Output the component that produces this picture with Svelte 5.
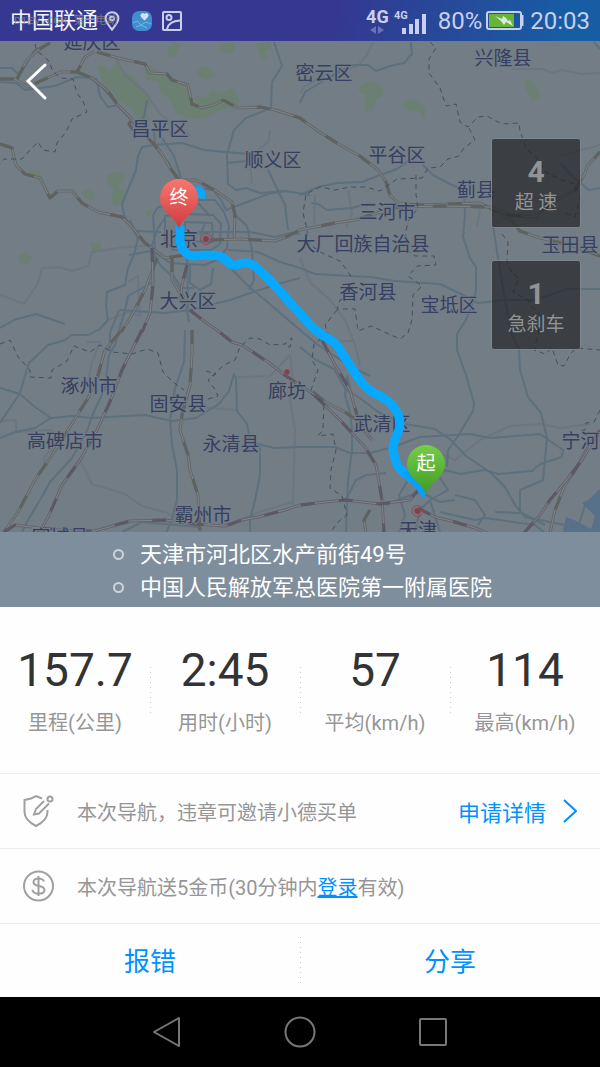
<script lang="ts">
  type Place = { name: string; x: number; y: number };

  const places: Place[] = [
    { name: '延庆区', x: 92, y: 49 },
    { name: '密云区', x: 324, y: 80 },
    { name: '兴隆县', x: 503, y: 65 },
    { name: '昌平区', x: 160, y: 136 },
    { name: '顺义区', x: 273, y: 167 },
    { name: '平谷区', x: 397, y: 162 },
    { name: '蓟县', x: 476, y: 197 },
    { name: '三河市', x: 387, y: 219 },
    { name: '北京', x: 179, y: 246 },
    { name: '大厂回族自治县', x: 363, y: 251 },
    { name: '玉田县', x: 570, y: 252 },
    { name: '香河县', x: 368, y: 299 },
    { name: '大兴区', x: 188, y: 308 },
    { name: '宝坻区', x: 449, y: 312 },
    { name: '涿州市', x: 89, y: 393 },
    { name: '廊坊', x: 287, y: 398 },
    { name: '固安县', x: 178, y: 411 },
    { name: '武清区', x: 382, y: 431 },
    { name: '高碑店市', x: 65, y: 448 },
    { name: '永清县', x: 231, y: 451 },
    { name: '宁河区', x: 590, y: 448 },
    { name: '霸州市', x: 203, y: 522 },
    { name: '容城县', x: 60, y: 544 },
    { name: '天津', x: 418, y: 537 }
  ];

  const minorRoads: string[] = [
    'M115 56 125 75 145 92 160 114 180 128 190 136',
    'M373 42 367 55 358 66 330 72 304 87 300 93',
    'M512 69 542 69 552 73 562 70 582 74 600 73',
    'M0 295 24 304 38 283 42 268 60 267 72 271 88 266 92 252 118 248 150 245',
    'M108 320 128 312 140 316 138 276 128 282',
    'M270 130 268 142 258 150 250 162 252 184',
    'M315 194 314 225M348 190 352 214 346 228',
    'M300 258 310 282 330 300 345 320 355 345 360 365',
    'M325 342 355 341',
    'M80 460 92 484 125 494 142 506 165 512 180 520',
    'M0 421 16 420 16 432 52 430 62 437 44 458 44 468',
    'M238 377 270 376 290 355 293 380 290 400 295 430 293 505',
    'M430 448 455 460 480 440 510 426 540 424 560 428 590 424',
    'M560 156 600 145M480 210 477 226',
    'M86 342 100 342 92 362 88 382M200 407 235 410',
    'M230 524 262 511 293 502'
  ];

  const roads: string[] = [
    'M0 68 12 68 18 74 24 68 34 51 50 43',
    'M0 82 16 83 25 90 55 86 77 77 90 78 103 88 119 107 130 119 140 132',
    'M96 78 100 96 108 107 118 105',
    'M141 128 145 112 147 100',
    'M274 42 282 66 272 82 271 108 246 118 234 130 227 154 228 184 236 190 246 188 260 193 285 191 310 195',
    'M411 42 412 54 404 63 390 66 376 71 368 65 352 65 332 76 305 92 300 103',
    'M594 42 600 49',
    'M154 130 155 147 169 163 176 178M162 138 174 156 181 178',
    'M154 145 182 143 204 150 248 154M227 163 247 161 261 164',
    'M154 145 142 147 138 156 136 170 129 187 122 204 124 215 138 238 134 255 128 268 125 285 107 292 106 307 108 320 98 331',
    'M130 220 137 235 152 248 160 265 178 282 185 300 189 322',
    'M153 215 158 207 173 205 190 200 215 200 224 212 229 226 227 248 219 259 205 265 170 263 155 252 153 215',
    'M165 216 185 214 213 215 221 224 220 244 211 250 173 250 165 240Z',
    'M185 222 212 223 213 242 185 241Z',
    'M192 187 213 190 221 200 226 210 268 194 285 191M198 203 210 216M200 235 205 224',
    'M170 232 250 232 275 237 290 233 300 234M228 250 258 252 280 262 300 268',
    'M235 215 247 226 252 250 254 280 249 290M268 170 285 205 288 230',
    'M136 231 161 232M165 218 158 228 151 248M151 251 129 255M155 251 153 282 128 296 125 311 119 330',
    'M190 265 190 283 200 290 211 284 213 268M170 270 181 288 194 288',
    'M120 310 165 313 190 310 230 300 250 293 278 284 300 278',
    'M187 248 188 310M228 265 245 283 265 300 300 330 318 345 350 366 370 376',
    'M0 328 14 320 36 314 65 324M119 310 110 333 110 350',
    'M97 330 89 335 72 335 65 340 48 345 29 363 24 379 20 393 0 423',
    'M119 330 115 345 109 355 107 370 105 388 92 416 87 431 72 458 50 482 40 500 28 520 22 532',
    'M0 388 20 394 35 407 51 418 72 416 92 418 145 415 172 421 196 418 219 404 229 391 234 374 236 378 237 411 247 424 250 440 258 444 274 448 300 447 335 447 350 453 370 453 390 448 420 437 470 434 490 438 540 434 563 450 562 457 540 464 532 471 498 474 484 470 460 474 445 470 425 488',
    'M0 438 15 432 35 428 51 418',
    'M185 330 184 362 175 388 170 420 172 445 177 470 177 500 171 522 166 533',
    'M260 444 260 475 255 500 250 520 250 533',
    'M300 195 318 187 337 183 362 182 380 175 397 169 408 161',
    'M423 165 433 175 450 184 464 190 465 214 463 237 470 258 476 267 476 290 474 300 466 320 457 334 457 350 466 375 474 403 473 411 458 436 448 450 447 467',
    'M311 203 318 204 327 210 352 208 370 203',
    'M300 268 315 274 350 276 370 277 395 281 440 284 463 295 478 303 505 300 535 300 567 289 600 289',
    'M493 225 497 252 505 300 512 335 519 350 520 370 528 397 541 413 547 438 543 480 520 490 520 512 545 525',
    'M560 163 574 178 589 190 600 188',
    'M300 347 316 360 334 369 346 390 360 398 378 412 405 424 435 429 451 440 466 456 490 472 505 487 515 505 525 517 560 524 578 527 585 505 600 490',
    'M350 388 347 376 345 395 350 412 352 430 352 450 348 480 346 533',
    'M346 500 356 480 366 475 386 473',
    'M399 532 405 515 399 495 408 480 425 470 435 470 448 490 430 500 420 510 415 532',
    'M386 505 400 499 420 492 440 502 455 500M430 500 440 532M440 512 475 520 485 518 500 520 535 525 545 533',
    'M455 495 475 500 485 515 478 525M520 513 495 512',
    'M122 532 142 522 165 524 200 527'
  ];

  // double line highways with dark inlay sections
  const highways: string[] = [
    'M0 79 15 79 28 87 60 72 77 72 85 57 95 51',
    'M17 79 27 60 38 50 50 43',
    'M77 72 92 78 108 91 118 105 132 119 129 124 133 130',
    'M97 52 118 58 145 64 150 73 167 74 172 80 188 85 192 104 202 108 213 105 223 100 238 108 260 107 275 110 300 118 318 131 340 145 360 156 378 170 386 182 390 195 398 203 418 205 450 204 480 203 500 213 512 221 520 231 540 238 570 245 600 256',
    'M0 144 12 148 16 165 25 174 40 178 50 198 58 191 72 191 82 203 98 212 122 217 132 227 145 243 165 258 178 256 195 253',
    'M148 138 160 151 170 168 179 180 196 180 216 191 232 202 235 215 234 240',
    'M172 258 172 280 180 293 184 303',
    'M157 258 145 290 132 315 121 332',
    'M210 240 240 239 275 241 286 237 300 230 335 223 355 220 397 207 445 206 490 207 510 215 535 217 552 202 560 198 575 190 584 175 588 165 600 152',
    'M120 332 105 350 98 375 88 398 66 433 50 458 35 480 18 512 4 532',
    'M192 330 192 355 190 385 182 415 180 430 188 455 190 470 198 495 200 532',
    'M313 392 325 402 345 412 365 426',
    'M600 432 588 447 574 472 565 485 555 510 550 533M370 510 364 520 366 533'
  ];

  const railways: string[] = [
    'M187 265 182 285 180 300M152 248 153 285 150 313 142 332',
    'M190 310 205 322 217 330 232 342 242 345 268 362 286 376 312 393 340 420 365 447 376 465 382 500 384 532',
    'M142 330 122 370 112 397 97 430 80 460 62 485 50 513 40 532',
    'M4 532 15 525 40 528 70 531 95 531 130 521 165 520 195 524 225 526 242 520 258 517 285 510 300 505 325 502 345 500 380 504 410 500 418 490',
    'M322 340 335 365 350 390 354 405 360 425 372 440',
    'M418 508 435 517 455 522 475 528 490 534M524 533 540 515 550 500 565 482 582 460 600 430'
  ];

  const borders: string[] = [
    'M35 44 37 51 48 60 53 71 60 78 73 79 77 93 83 101 87 112 72 119 66 132 57 143 55 152 43 150 38 142 30 150 22 159 4 159 0 164',
    'M430 42 436 48 429 59 429 73 440 88 446 106 456 104 460 122 468 127 478 117 487 116 502 124 519 123 520 131 527 150 537 158 545 172 562 180 575 184 580 198 575 217 564 212',
    'M469 128 475 140 464 148 459 156 448 159 440 167 428 168 422 178 397 179 380 191 366 187 350 187 335 190 320 187 306 194 303 213 306 225 309 244 322 253 340 261 347 270 352 278',
    'M416 175 416 195 418 208 408 221 406 232 402 246 415 256 434 256 436 265 417 266 408 276 422 286 413 295 412 320 408 333 400 339 371 326 358 331 355 309 337 309 340 300 350 297',
    'M0 344 10 340 18 357 30 370 30 377 51 378 52 370 67 361 74 346 90 352 100 345 112 352 132 354 147 349 158 353 163 372 173 382 184 390',
    'M206 371 216 374 208 380 214 388 218 396 205 400M212 376 224 365 235 360 240 347 250 338 260 339 270 345 285 344 292 338 290 347 285 346',
    'M337 310 325 325 328 333 314 344 312 360 318 370 310 393 324 403 323 430 318 436 333 434 336 450 331 470 330 488 342 496 347 515 338 522 330 533',
    'M502 234 508 242 507 262 512 273 519 278 513 292 528 300 530 305 540 315 538 335 534 350 545 354 552 348 558 365 564 366 571 353 577 348 600 350',
    'M600 410 594 422 586 423 585 430 578 431'
  ];

  const woods: string[] = [
    'M97 66 105 66 109 72 116 60 123 72 131 74 138 80 140 88 147 92 152 104 146 112 150 122 138 119 131 108 118 100 112 90 103 84Z',
    'M143 67 150 65 158 70 168 78 176 81 187 87 191 103 196 96 205 98 212 89 220 93 232 88 240 99 236 108 223 109 206 118 190 119 176 113 170 100 160 92 158 82 147 80Z',
    'M167 50 174 42 180 44 176 56 169 58Z',
    'M196 71 203 66 210 69 215 75 207 80 198 77Z',
    'M219 45 235 42 235 50 230 54 218 50Z',
    'M256 44 270 42 272 48 264 52 270 60 262 58Z',
    'M358 88 364 83 370 81 378 84 384 90 381 97 376 99 373 109 366 112 364 101 367 96 360 92Z',
    'M402 104 410 99 420 102 426 110 424 120 419 112 404 109Z',
    'M524 78 534 82 541 98 533 101 526 91Z',
    'M28 170 38 171 44 180 42 184 34 176Z',
    'M107 175 115 172 125 173 124 180 118 186 125 192 124 203 115 207 111 199 114 188 107 184Z',
    'M81 192 88 189 95 194 94 200 84 198Z',
    'M18 255 26 252 32 258 28 265 20 262Z',
    'M91 243 101 241 101 248 94 252 91 248ZM144 213 152 209 151 218Z'
  ];

  const stats: { value: string; label: string }[] = [
    { value: '157.7', label: '里程(公里)' },
    { value: '2:45', label: '用时(小时)' },
    { value: '57', label: '平均(km/h)' },
    { value: '114', label: '最高(km/h)' }
  ];

  const warnings: { count: number; label: string }[] = [
    { count: 4, label: '超 速' },
    { count: 1, label: '急刹车' }
  ];

  const stops: string[] = ['天津市河北区水产前街49号', '中国人民解放军总医院第一附属医院'];
</script>

<div class="page">
  <header class="status-bar">
    <span class="carrier">中国联通</span>
    <span class="watermark">D1EV.COM 第一电动</span>
    <svg class="pin-icon" width="16" height="20" viewBox="0 0 16 20">
      <path d="M8 1.2a6.3 6.3 0 0 0-6.4 6.4C1.600 11.500 6 16 8 18.700 10 16 14.400 11.500 14.400 7.600A6.300 6.300 0 0 0 8 1.200Z" />
      <circle cx="8" cy="7.500" r="2" />
    </svg>
    <svg class="app-icon" width="20" height="20" viewBox="0 0 20 20">
      <rect width="20" height="20" rx="7" fill="#3f8fd0" />
      <path d="M1 12l4-2 4 4 5-3 5 2M4 16l5-2 6 3" fill="none" stroke="#73b7e4" />
      <path d="M12.500 9.500 9 6a2 2 0 0 1 3.500-3A2.200 2.200 0 0 1 16 6Z" fill="#d5e3f5" />
    </svg>
    <svg class="picture-icon" width="20" height="20" viewBox="0 0 20 20">
      <rect x="1" y="1" width="18" height="18" rx="1" />
      <circle cx="7" cy="6.500" r="2.500" />
      <path d="M5 18c1-5 5-8 13-8.500" />
    </svg>
    <div class="indicators">
      <div class="network">
        <b>4G</b>
        <svg width="14" height="8" viewBox="0 0 14 8"><path d="M6 0v8L0 4ZM8 0v8l6-4Z" fill="#6e70ba" /></svg>
      </div>
      <svg class="signal" width="32" height="28" viewBox="0 0 32 28">
        <text x="0" y="12">4G</text>
        <path d="M10 27v-6M17 27V17M23 27V12M30 27V7" />
      </svg>
      <span class="percent">80%</span>
      <svg class="battery" width="38" height="20" viewBox="0 0 38 20">
        <rect x="1" y="1" width="34" height="17" rx="2" fill="none" stroke="#c8d0ee" stroke-width="2" />
        <rect x="3" y="3" width="25" height="13" fill="#67b436" />
        <path d="M36.500 4v11" stroke="#c8d0ee" stroke-width="2" />
        <path d="M9 5l7 3 1-3 3 2 2 3 2-1 3 6-7-4-2 3-3-4Z" fill="#dce8e2" />
      </svg>
      <span class="clock">20:03</span>
    </div>
  </header>

  <section class="map-area">
    <svg class="map" viewBox="0 41 600 491">
      <defs>
        <linearGradient id="endFill" x1="0" y1="0" x2="0" y2="1">
          <stop offset="0" stop-color="#f8776f" />
          <stop offset="1" stop-color="#cd3a3c" />
        </linearGradient>
        <linearGradient id="startFill" x1="0" y1="0" x2="0" y2="1">
          <stop offset="0" stop-color="#75cd48" />
          <stop offset="1" stop-color="#3f9a25" />
        </linearGradient>
      </defs>
      <rect y="41" width="600" height="491" fill="#737d86" />
      {#each woods as d}
        <path class="wood" {d} />
      {/each}
      <path class="sea" d="M600 491 592 498 582 503 595 516 591 529 574 520 566 517 563 532H600Z" />
      {#each minorRoads as d}
        <path class="minor" {d} />
      {/each}
      {#each roads as d}
        <path class="road" {d} />
      {/each}
      {#each highways as d}
        <path class="casing" {d} />
        <path class="inlay" {d} />
        <path class="dashes" {d} />
      {/each}
      {#each railways as d}
        <path class="casing rail" {d} />
        <path class="inlay" {d} />
        <path class="dashes rail" {d} />
      {/each}
      {#each borders as d}
        <path class="border" {d} />
      {/each}
      {#each places as place}
        <text class="place" x={place.x} y={place.y}>{place.name}</text>
      {/each}
      <g class="city">
        <circle cx="206" cy="239" r="5.500" />
        <circle cx="206" cy="239" r="3" class="core" />
        <circle cx="417.500" cy="511" r="5.500" />
        <circle cx="417.500" cy="511" r="3" class="core" />
        <circle cx="287" cy="372" r="2.500" class="core" />
      </g>
      <path class="route" d="M194 191 199 191Q201 192 201 195L200 198" stroke-width="6" />
      <path class="route" d="M180 226V238Q180 246 184 251Q188 256 195 256Q207 254 219 256Q225 258 229 263Q234 267 239 264Q247 261 253 265Q267 276 277 288L304 318Q314 331 329 339Q337 343 342 353L357 376Q365 388 374 393Q389 399 395 409Q402 419 399 430Q393 442 393 449Q394 459 399 468Q404 473 408 475L412 480" />
      <path d="M403 473 410 470 426 493 424 499Z" fill="#079ffc" />
      <path d="M179 229C176 216 160 213 160 198a19 19 0 0 1 38 0C198 213 182 216 179 229Z" fill="url(#endFill)" />
      <text class="pin-text" x="179" y="204">终</text>
      <path d="M426 495C423 482 407 479 407 464a19 19 0 0 1 38 0C445 479 429 482 426 495Z" fill="url(#startFill)" />
      <text class="pin-text" x="426" y="470">起</text>
    </svg>

    <button class="back" aria-label="返回">
      <svg width="24" height="40" viewBox="0 0 24 40"><path d="M21 4 4 20 21 37" /></svg>
    </button>

    <div class="warnings">
      {#each warnings as warning}
        <button class="warning">
          <b>{warning.count}</b>
          <span>{warning.label}</span>
        </button>
      {/each}
    </div>
  </section>

  <ul class="stops">
    {#each stops as stop}
      <li>{stop}</li>
    {/each}
  </ul>

  <section class="stats">
    {#each stats as stat}
      <div class="stat">
        <strong>{stat.value}</strong>
        <span>{stat.label}</span>
      </div>
    {/each}
  </section>

  <div class="row">
    <svg class="row-icon" width="32" height="34" viewBox="0 0 32 34">
      <path d="M19 4.500 13 2 8 4.500 1.500 6v12c0 6 5 10.500 11.500 14 7-3.500 11.500-8 11.500-14v-2" />
      <path d="M21 7 13 15l-2 5.500 5-1L26 9.500" />
      <circle cx="27" cy="5" r="2.500" />
    </svg>
    <span>本次导航，违章可邀请小德买单</span>
    <a class="details" href="#details">
      申请详情
      <svg width="14" height="24" viewBox="0 0 14 24"><path d="M1 1 13 12 1 23" /></svg>
    </a>
  </div>

  <div class="row">
    <svg class="row-icon" width="32" height="34" viewBox="0 0 32 34">
      <circle cx="15.500" cy="17" r="14.500" />
      <path d="M21 12.500C20 10 18 9.500 15.500 9.500c-3 0-5 1.500-5 3.700 0 5.300 11 2.300 11 7.600 0 2.500-2.500 4-6 4-3.200 0-5.500-1.200-6.200-4M15.500 7v20" />
    </svg>
    <span>本次导航送5金币(30分钟内<a href="#login">登录</a>有效)</span>
  </div>

  <div class="actions">
    <button>报错</button>
    <button>分享</button>
  </div>

  <nav class="nav-bar">
    <button aria-label="后退">
      <svg width="32" height="32" viewBox="0 0 32 32"><path d="M28 2V30L3 16Z" /></svg>
    </button>
    <button aria-label="主页">
      <svg width="32" height="32" viewBox="0 0 32 32"><circle cx="16" cy="16" r="14.500" /></svg>
    </button>
    <button aria-label="最近任务">
      <svg width="32" height="32" viewBox="0 0 32 32"><rect x="3" y="3" width="26" height="26" rx="1" /></svg>
    </button>
  </nav>
</div>

<style>
:global(body) {
  margin: 0;
  background: #000;
}
.page {
  font-family: Roboto, "Noto Sans CJK SC", sans-serif;
  background: #fefefe;
  color: #969696;
}
button {
  font-family: inherit;
  border: none;
  background: none;
  padding: 0;
  cursor: pointer;
}
a {
  color: #0091ff;
}
svg {
  flex: none;
}

/* Status bar */
.status-bar {
  position: relative;
  display: flex;
  align-items: center;
  height: 41px;
  padding: 0 10px;
  color: #c8d0ee;
  background: linear-gradient(100deg, #353790 55%, #175da4 94%);
}
.carrier {
  color: #f2f3fb;
  font-size: 22px;
  line-height: 40px;
}
.watermark {
  position: absolute;
  left: 14px;
  top: 12px;
  font: 11px/18px "Liberation Mono", "Noto Sans CJK SC", monospace;
  color: #8d8880;
  opacity: 0.8;
  white-space: nowrap;
}
.pin-icon,
.picture-icon {
  fill: none;
  stroke: #c8d0ee;
  stroke-width: 2;
}
.pin-icon {
  margin-left: 6px;
}
.app-icon {
  margin-left: 12px;
}
.picture-icon {
  margin-left: 10px;
}
.indicators {
  display: flex;
  align-items: center;
  margin-left: auto;
  font-size: 24px;
}
.network {
  display: flex;
  flex-direction: column;
  align-items: center;
  font-size: 18px;
  line-height: 18px;
  margin-right: 5px;
}
.signal text {
  font-size: 11px;
  font-weight: bold;
  fill: #c8d0ee;
}
.signal path {
  stroke: #c8d0ee;
  stroke-width: 4;
}
.percent {
  margin-left: 12px;
}
.battery {
  margin: 0 6px 0 4px;
}

/* Map */
.map-area {
  position: relative;
}
.map {
  display: block;
  width: 100%;
}
.map path {
  stroke-linejoin: round;
}
.map .wood {
  fill: #6b8073;
}
.map .sea {
  fill: #567189;
}
.minor,
.road,
.casing,
.inlay,
.dashes,
.border,
.route {
  fill: none;
}
.minor {
  stroke: #6b7681;
  stroke-width: 2;
}
.road {
  stroke: #5c707e;
  stroke-width: 2;
}
.casing {
  stroke: #646869;
  stroke-width: 3;
}
.casing.rail {
  stroke: #65636e;
}
.inlay {
  stroke: #7f868b;
  stroke-width: 1;
}
.dashes {
  stroke: #5f625f;
  stroke-width: 3;
  stroke-dasharray: 14 24;
}
.dashes.rail {
  stroke: #5d5866;
}
.border {
  stroke: #454e62;
  stroke-width: 1;
  stroke-dasharray: 5 4;
}
.place {
  font-size: 19px;
  text-anchor: middle;
  fill: #363f61;
  stroke: #737d86;
  stroke-width: 2;
  paint-order: stroke;
}
.city circle {
  fill: none;
  stroke: #8b4d59;
  stroke-width: 1;
}
.city .core {
  fill: #873e4a;
}
.route {
  stroke: #07a8ff;
  stroke-width: 9;
}
.pin-text {
  font-size: 19px;
  text-anchor: middle;
  fill: #fff;
}
.back {
  position: absolute;
  left: 24px;
  top: 20px;
  line-height: 0;
}
.back path {
  fill: none;
  stroke: #fff;
  stroke-width: 3;
  stroke-linecap: round;
}
.warnings {
  position: absolute;
  right: 19px;
  top: 97px;
  display: flex;
  flex-direction: column;
  gap: 32px;
}
.warning {
  display: flex;
  flex-direction: column;
  align-items: center;
  box-sizing: border-box;
  width: 90px;
  height: 90px;
  padding-top: 16px;
  border: 1px solid #7d868e;
  border-radius: 3px;
  background: rgba(30, 30, 30, 0.66);
  color: #919394;
  font-size: 19px;
  line-height: 28px;
}
.warning b {
  font-size: 30px;
  line-height: 34px;
}

/* Start and end address */
.stops {
  margin: 0;
  padding: 6px 12px 3px 113px;
  list-style: none;
  background: #7f8e9c;
  color: #fff;
  font-size: 22px;
  line-height: 33px;
}
.stops li {
  display: flex;
  align-items: center;
  gap: 16px;
}
.stops li::before {
  content: '';
  box-sizing: border-box;
  width: 11px;
  height: 11px;
  border: 2px solid #cdd3d8;
  border-radius: 50%;
}

/* Trip numbers */
.stats {
  display: grid;
  grid-template-columns: repeat(4, 1fr);
  padding: 37px 0 35px;
}
.stat {
  display: flex;
  flex-direction: column;
  align-items: center;
  gap: 11px;
  font-size: 20px;
  line-height: 30px;
}
.stat strong {
  color: #333;
  font-size: 46px;
  font-weight: normal;
  line-height: 53px;
}
.stat + .stat,
.actions button + button {
  background: repeating-linear-gradient(#ccc 0 1px, transparent 1px 5px) no-repeat left center / 1px 48px;
}

/* Offer rows */
.row {
  display: flex;
  align-items: center;
  box-sizing: border-box;
  height: 75px;
  padding: 0 23px;
  border-top: 1px solid #ececec;
  font-size: 20px;
}
.row-icon {
  margin-right: 22px;
  fill: none;
  stroke: #a0a0a0;
  stroke-width: 2;
}
.details {
  display: flex;
  align-items: center;
  gap: 17px;
  margin-left: auto;
  font-size: 22px;
  text-decoration: none;
}
.details path {
  fill: none;
  stroke: #0091ff;
  stroke-width: 2;
}
.actions {
  display: grid;
  grid-template-columns: 1fr 1fr;
  border-top: 1px solid #ececec;
}
.actions button {
  height: 73px;
  padding-bottom: 2px;
  color: #0091ff;
  font-size: 26px;
}

/* System keys */
.nav-bar {
  display: flex;
  justify-content: center;
  gap: 101px;
  padding: 19px 0;
  background: #000;
}
.nav-bar button {
  line-height: 0;
}
.nav-bar svg {
  fill: none;
  stroke: #777;
  stroke-width: 2;
  stroke-linejoin: round;
}
</style>
